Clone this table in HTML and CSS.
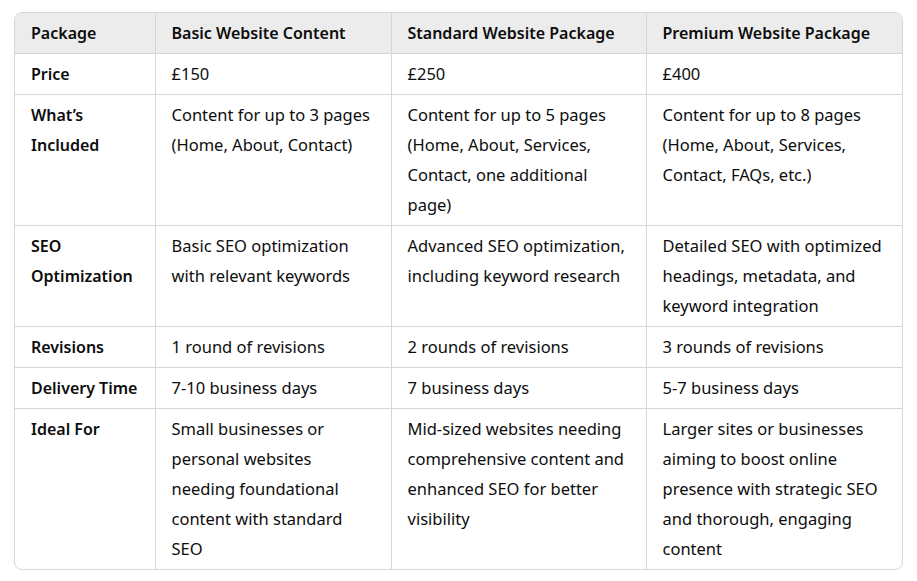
FILE: index.html
```html
<!DOCTYPE html>
<html lang="en">
<head>
<meta charset="utf-8">
<title>Website Content Packages</title>
<link rel="stylesheet" href="styles.css">
</head>
<body>
<div class="table-wrap">
  <table class="pkg-table">
    <colgroup>
      <col class="c1"><col class="c2"><col class="c3"><col class="c4">
    </colgroup>
    <thead>
      <tr>
        <th>Package</th>
        <th>Basic Website Content</th>
        <th>Standard Website Package</th>
        <th>Premium Website Package</th>
      </tr>
    </thead>
    <tbody>
      <tr>
        <td class="label">Price</td>
        <td>£150</td>
        <td>£250</td>
        <td>£400</td>
      </tr>
      <tr>
        <td class="label">What’s Included</td>
        <td>Content for up to 3 pages (Home, About, Contact)</td>
        <td>Content for up to 5 pages (Home, About, Services, Contact, one additional page)</td>
        <td>Content for up to 8 pages (Home, About, Services, Contact, FAQs, etc.)</td>
      </tr>
      <tr>
        <td class="label">SEO Optimization</td>
        <td>Basic SEO optimization with relevant keywords</td>
        <td>Advanced SEO optimization, including keyword research</td>
        <td>Detailed SEO with optimized headings, metadata, and keyword integration</td>
      </tr>
      <tr>
        <td class="label">Revisions</td>
        <td>1 round of revisions</td>
        <td>2 rounds of revisions</td>
        <td>3 rounds of revisions</td>
      </tr>
      <tr>
        <td class="label">Delivery Time</td>
        <td>7-10 business days</td>
        <td>7 business days</td>
        <td>5-7 business days</td>
      </tr>
      <tr>
        <td class="label">Ideal For</td>
        <td>Small businesses or personal websites needing foundational content with standard SEO</td>
        <td>Mid-sized websites needing comprehensive content and enhanced SEO for better visibility</td>
        <td>Larger sites or businesses aiming to boost online presence with strategic SEO and thorough, engaging content</td>
      </tr>
    </tbody>
  </table>
</div>
</body>
</html>
```
FILE: styles.css
```css
html, body {
  margin: 0;
  padding: 0;
  background: #ffffff;
}
body {
  font-family: "Noto Sans", "Open Sans", "Liberation Sans", sans-serif;
  font-size: 16.5px;
  color: #0d0d0d;
  padding: 12px 14px;
}
.table-wrap {
  width: 889px;
  border: 1px solid #d6d6d6;
  border-radius: 8px;
  overflow: hidden;
  box-sizing: border-box;
}
.pkg-table {
  width: 100%;
  table-layout: fixed;
  border-collapse: collapse;
}
.c1 { width: 140px; }
.c2 { width: 236px; }
.c3 { width: 255px; }
.c4 { width: 256px; }
.pkg-table th,
.pkg-table td {
  text-align: left;
  vertical-align: top;
  padding: 5px 16px;
  line-height: 30px;
  border-right: 1px solid #d6d6d6;
  border-bottom: 1px solid #d6d6d6;
}
.pkg-table th:last-child,
.pkg-table td:last-child {
  border-right: none;
}
.pkg-table tbody tr:last-child td {
  border-bottom: none;
}
.pkg-table th {
  background: #ececec;
  font-weight: 600;
  font-size: 16px;
}
.pkg-table td.label {
  font-weight: 600;
  font-size: 16px;
}
```
